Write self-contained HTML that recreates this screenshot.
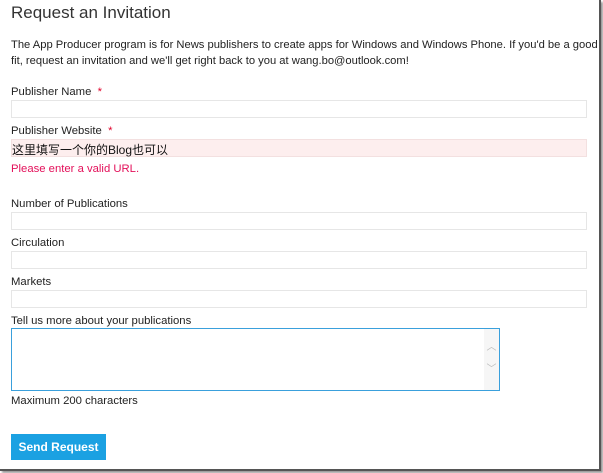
<!DOCTYPE html>
<html><head><meta charset="utf-8"><style>
body{margin:0;width:603px;height:473px;background:#fff;position:relative;overflow:hidden;font-family:"Liberation Sans","Noto Sans CJK SC",sans-serif;color:#222;}
.frame{position:absolute;left:0;top:0;width:599px;height:469px;border-right:2px solid #555;border-bottom:2px solid #555;box-shadow:2px 2px 2px #999;}
.t{position:absolute;left:11px;white-space:nowrap;}
.l{font-size:11.3px;}
.star{color:#e0002a;}
.in{position:absolute;left:11px;width:574px;height:16px;border:1px solid #e6e6e6;background:#fff;}
</style></head><body>
<div class="frame"></div>
<div class="t" style="top:3px;font-size:17px;color:#333">Request an Invitation</div>
<div class="t" style="top:37px;font-size:11.2px;line-height:16px">The App Producer program is for News publishers to create apps for Windows and Windows Phone. If you'd be a good<br>fit, request an invitation and we'll get right back to you at wang.bo@outlook.com!</div>
<div class="t l" style="top:86px">Publisher Name <span class="star">&nbsp;*</span></div>
<div class="in" style="top:100px"></div>
<div class="t l" style="top:125px">Publisher Website <span class="star">&nbsp;*</span></div>
<div class="in" style="top:139px;background:#fdeeee;border-color:#f3e0e0"></div>
<div class="t" style="top:141px;left:12px;font-size:12px;color:#111">这里填写一个你的Blog也可以</div>
<div class="t l" style="top:163px;color:#e3105a">Please enter a valid URL.</div>
<div class="t l" style="top:198px">Number of Publications</div>
<div class="in" style="top:212px"></div>
<div class="t l" style="top:237px">Circulation</div>
<div class="in" style="top:251px"></div>
<div class="t l" style="top:276px">Markets</div>
<div class="in" style="top:290px"></div>
<div class="t l" style="top:315px">Tell us more about your publications</div>
<div style="position:absolute;left:11px;top:328px;width:487px;height:61px;border:1px solid #3aa0dc;background:#fff">
<div style="position:absolute;right:0;top:0;width:15px;height:61px;background:#f6f6f6;color:#bbb;font-size:10px;text-align:center;line-height:22px;padding-top:8px;box-sizing:border-box">︿<br>﹀</div></div>
<div class="t l" style="top:395px">Maximum 200 characters</div>
<div style="position:absolute;left:11px;top:434px;width:95px;height:26px;background:#1ba1e2;color:#fff;font-size:12px;font-weight:bold;text-align:center;line-height:26px">Send Request</div>
</body></html>
